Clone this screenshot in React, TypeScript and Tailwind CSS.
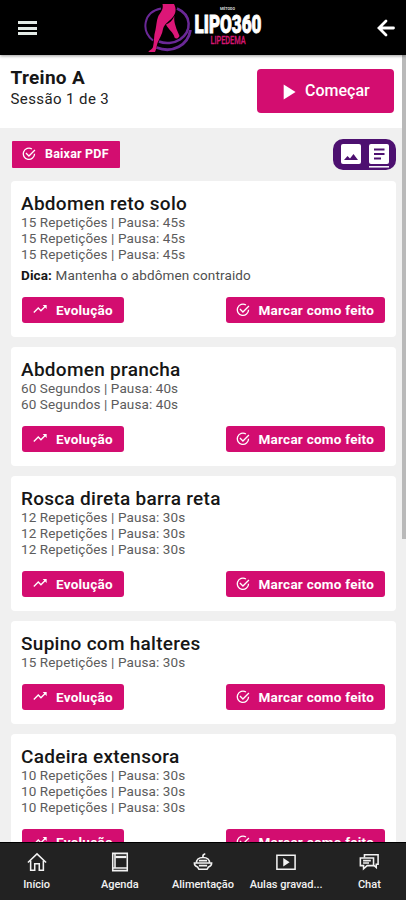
import React, { useState } from 'react';
import { MdTrendingUp, MdPlayArrow } from 'react-icons/md';

interface Exercise {
  name: string;
  sets: string[];
  tip?: string;
}

const exercises: Exercise[] = [
  {
    name: 'Abdomen reto solo',
    sets: ['15 Repetições | Pausa: 45s', '15 Repetições | Pausa: 45s', '15 Repetições | Pausa: 45s'],
    tip: 'Mantenha o abdômen contraido',
  },
  {
    name: 'Abdomen prancha',
    sets: ['60 Segundos | Pausa: 40s', '60 Segundos | Pausa: 40s'],
  },
  {
    name: 'Rosca direta barra reta',
    sets: ['12 Repetições | Pausa: 30s', '12 Repetições | Pausa: 30s', '12 Repetições | Pausa: 30s'],
  },
  {
    name: 'Supino com halteres',
    sets: ['15 Repetições | Pausa: 30s'],
  },
  {
    name: 'Cadeira extensora',
    sets: ['10 Repetições | Pausa: 30s', '10 Repetições | Pausa: 30s', '10 Repetições | Pausa: 30s'],
  },
];

const CheckIcon = () => (
  <svg viewBox="0 0 16 16" className="h-[15px] w-[15px] shrink-0" fill="none" stroke="currentColor" strokeWidth="1.4">
    <path d="M10.600 2.200A6 6 0 1 0 13.400 7.200" />
    <path d="M4.200 6.400l3.200 3.200L13.800 3.200" />
  </svg>
);

const Logo = () => (
  <svg viewBox="0 0 120 52" className="h-[52px] w-[120px]">
    <g fill="none" stroke="#6a2896">
      <path d="M17 5.500C-1 9 -3 28 9 37.500" strokeWidth="2" />
      <path d="M33 5.500C48 12 48 28 36 36.500C30 40.500 21 41 15 38.500" strokeWidth="2.500" />
      <path d="M46.500 27C44 42 29 51 12.500 44.500" strokeWidth="2.800" />
    </g>
    <path
      fill="#dc1677"
      d="M18.500 1H30C32.500 5.500 32 10.500 28.500 14.500C25 18.500 20.500 20.500 19 26C18.500 31 15.500 35 13.500 40C12.500 43 12.500 46 11 49H4.500C4.500 47.500 8 47 9 44C10.500 38 9.500 33 11.500 27C12.500 22 12.500 18 14 14C15.500 10 20 7 18.500 1Z"
    />
    <path fill="#dc1677" d="M30.500 13C29.500 18 31.500 22 32.500 26L35.500 33C34.500 35.500 32 36.500 30.500 34.500C30 30 24 26 22 21.500C25.500 20 28.500 17.500 30.500 13Z" />
    <text x="76" y="6.500" fontSize="4" fontWeight="700" fill="#ddd" textLength="15" lengthAdjust="spacingAndGlyphs">MÉTODO</text>
    <text
      x="50.500"
      y="29.500"
      fontSize="26.500"
      fontWeight="900"
      fill="white"
      stroke="white"
      strokeWidth=".9"
      textLength="67"
      lengthAdjust="spacingAndGlyphs"
    >
      LIPO360
    </text>
    <text
      x="66.500"
      y="41"
      fontSize="11.500"
      fontWeight="500"
      fill="#d31670"
      stroke="#d31670"
      strokeWidth=".3"
      textLength="35"
      lengthAdjust="spacingAndGlyphs"
    >
      LIPEDEMA
    </text>
  </svg>
);

const ExerciseCard = ({ exercise }: { exercise: Exercise }) => {
  const [done, setDone] = useState(false);

  return (
    <article className="shrink-0 rounded-[4px] bg-white px-[10.500px] pt-3 pb-3.5">
      <h2 className="mb-px text-[19px] leading-[21px] font-medium tracking-[.28px] text-[#161616]">{exercise.name}</h2>
      {exercise.sets.map((set, index) => (
        <p key={index} className="text-[13.500px] leading-[15.750px] tracking-[.1px] text-[#5c5c5c]">{set}</p>
      ))}
      {exercise.tip && (
        <p className="mt-[4.500px] mb-[14.500px] text-[13.500px] leading-4 tracking-[.13px] text-[#4f4f4f]">
          <strong className="font-bold text-[#161616]">Dica:</strong> {exercise.tip}
        </p>
      )}
      <div className="mt-[13.500px] flex justify-between px-px">
        <button className="flex h-[26px] w-[102px] items-center rounded-[3px] bg-[#d30d70] pl-2.5 text-[13.500px] font-bold tracking-[.25px] text-white">
          <MdTrendingUp className="mr-2 mb-[3px] h-4 w-4" />
          Evolução
        </button>
        <button
          onClick={() => setDone(!done)}
          className="flex h-[26px] w-[159px] items-center rounded-[3px] bg-[#d30d70] pl-2.5 text-[13.500px] font-bold tracking-[.25px] text-white"
        >
          <CheckIcon />
          <span className="ml-2 whitespace-nowrap">Marcar como feito</span>
        </button>
      </div>
    </article>
  );
};

const HomeIcon = () => (
  <path d="M1 11.500L11 2l10 9.500M4 9.500V20H8.500V13H13.500V20H18V9.500" />
);

const AgendaIcon = () => (
  <>
    <path d="M3 1.500H19V20.500H3ZM3 17.500H19M5.500 1.500V17.500" />
    <path d="M6 5.500H18" strokeWidth="2.500" />
  </>
);

const FoodIcon = () => (
  <>
    <path d="M1.500 12H20.500C20.500 15 18.500 16 17 16.500L15.500 19H6.500L5 16.500C3.500 16 1.500 15 1.500 12Z" />
    <path d="M4 12C3.500 8.500 6 6 11 6C16 6 18.500 8.500 18 12M11 6C10.500 4 11.500 2.500 13.500 2" />
    <path d="M6.500 9.500H15.500M6.500 15H15.500" strokeWidth="2" />
  </>
);

const VideoIcon = () => (
  <>
    <path d="M1 3.500H21V19H1Z" />
    <path d="M8 6.500L15 11.250L8 16Z" fill="currentColor" stroke="none" />
  </>
);

const ChatIcon = () => (
  <>
    <path d="M6 6V3H21V13.500H19V17L15.500 14" />
    <path d="M1.500 6.500H16V15H9L5 18.500V15H1.500Z" />
    <path d="M4.500 9.500H13M4.500 12H11" />
  </>
);

const navItems = [
  { label: 'Início', icon: <HomeIcon /> },
  { label: 'Agenda', icon: <AgendaIcon /> },
  { label: 'Alimentação', icon: <FoodIcon /> },
  { label: 'Aulas gravad...', icon: <VideoIcon /> },
  { label: 'Chat', icon: <ChatIcon /> },
];

const App = () => {
  return (
    <div className="relative flex h-[900px] w-[406px] flex-col overflow-hidden bg-[#f0f0f0] font-['Roboto',sans-serif]">
      <header className="z-10 flex h-[55px] shrink-0 items-start bg-black pl-[18px] shadow-[0_1px_3px_rgba(0,0,0,0.4)]">
        <button className="mt-[21px] flex flex-col gap-[2.500px]" aria-label="Menu">
          <span className="h-[3px] w-[19px] bg-[#e4ebe7]" />
          <span className="h-[3px] w-[19px] bg-[#e4ebe7]" />
          <span className="h-[3px] w-[19px] bg-[#e4ebe7]" />
        </button>
        <div className="mt-[3px] ml-[107px]">
          <Logo />
        </div>
        <button className="mt-[19px] mr-[11px] ml-auto text-white" aria-label="Voltar">
          <svg viewBox="0 0 18 18" className="h-[18px] w-[18px]" fill="none" stroke="currentColor" strokeWidth="2.800" strokeLinecap="round">
            <path d="M9 2L2 9L9 16M2.500 9H16.500" />
          </svg>
        </button>
      </header>

      <section className="flex h-[73px] shrink-0 items-start justify-between bg-white pr-3 pl-[10.500px]">
        <div className="pt-3">
          <h1 className="text-[19px] leading-[21px] font-bold tracking-[.3px] text-[#161616]">Treino A</h1>
          <p className="mt-px text-[15px] leading-[21px] tracking-[.4px] text-[#222]">Sessão 1 de 3</p>
        </div>
        <button className="mt-3.5 flex h-11 w-[137px] items-center rounded-[4px] bg-[#d30d70] pl-[18px] text-base font-medium text-white">
          <MdPlayArrow className="mt-px mr-1 h-[26px] w-[26px]" />
          Começar
        </button>
      </section>

      <div className="flex h-[53px] shrink-0 items-start justify-between pr-2.5 pl-3">
        <button className="mt-[13px] flex h-[27px] w-[108px] items-center rounded-[1px] bg-[#d30d70] pl-2.5 text-[12.500px] font-bold tracking-[.2px] text-white">
          <CheckIcon />
          <span className="ml-2 whitespace-nowrap">Baixar PDF</span>
        </button>
        <div className="mt-[11px] flex h-[31px] w-[63px] gap-2 rounded-[10px] bg-[#4d1070] pt-[5px] pl-2">
          <svg viewBox="0 0 20 20" className="h-5 w-5">
            <rect width="20" height="20" rx="2" fill="white" />
            <path d="M3 16L6.500 12L9 14.500L12.500 10L17 16Z" fill="#4d1070" />
          </svg>
          <svg viewBox="0 0 20 24" className="h-6 w-5">
            <rect width="20" height="20" rx="2" fill="white" />
            <path d="M5 5.500H15.500M5 10H15.500M5 14.500H12" stroke="#4d1070" strokeWidth="2" />
            <path d="M0 22.800H20" stroke="white" strokeWidth="1.500" />
          </svg>
        </div>
      </div>

      <main className="flex min-h-0 flex-1 flex-col gap-2.5 overflow-hidden pr-2.5 pl-[10.500px]">
        {exercises.map((exercise) => (
          <ExerciseCard key={exercise.name} exercise={exercise} />
        ))}
      </main>

      <nav className="-mx-[5px] grid h-[58px] shrink-0 grid-cols-5 border-t border-black bg-[#222] text-[#f2f2f2]">
        {navItems.map((item) => (
          <button key={item.label} className="flex min-w-0 flex-col items-center pt-[9px]">
            <svg viewBox="0 0 22 22" className="h-5 w-5" fill="none" stroke="currentColor" strokeWidth="1.700">
              {item.icon}
            </svg>
            <span className="mt-1.5 text-[11px] leading-[14px] font-medium whitespace-nowrap">{item.label}</span>
          </button>
        ))}
      </nav>

      {/* page scrollbar */}
      <div className="absolute top-[55px] right-0 h-[484px] w-1 bg-[#b9b9b9]" />
    </div>
  );
};

export default App;
